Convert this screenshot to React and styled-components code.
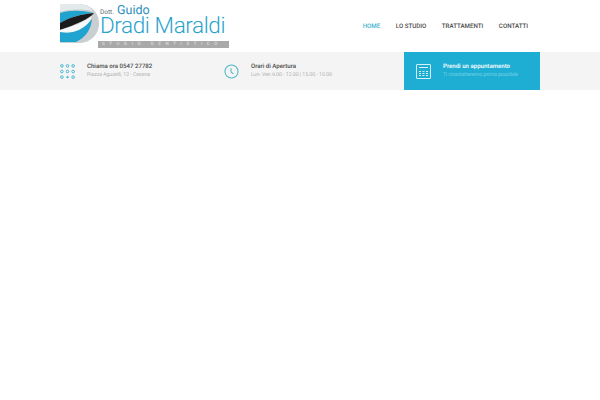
import React from 'react';
import styled, { createGlobalStyle } from 'styled-components';

const GlobalStyle = createGlobalStyle`
  html, body {
    margin: 0;
    padding: 0;
    background: #fff;
    font-family: 'Roboto', sans-serif;
    text-rendering: geometricPrecision;
  }
`;

const navItems = ['HOME', 'LO STUDIO', 'TRATTAMENTI', 'CONTATTI'];

const LogoMark = () => (
  <MarkSvg viewBox="0 0 39 39">
    <path d="M0 0H19C31 0 39 9 39 19.500C39 30 31 39 19 39H0Z" fill="#c9ced1" />
    <path d="M0 0H18C25 0 30 3 33 7C22 5 10 5 0 8Z" fill="#e4e9ec" />
    <path d="M0 9C10 6 22 6 33 9C22 10 10 13 0 19Z" fill="#1fa3cf" />
    <path d="M0 19C10 13 22 10 34 9C29 15 17 20 0 26Z" fill="#1b1b1d" />
    <path d="M0 26C12 23 24 18 32 12C30 19 25 24 19 27C12 29 6 29 0 28Z" fill="#f6f8f9" />
    <path d="M0 28C10 30 22 28 32 15C31 26 25 34 16 38H0Z" fill="#1fa3cf" />
  </MarkSvg>
);

const KeypadIcon = () => (
  <IconSvg viewBox="0 0 16 16" fill="none" stroke="#3fb3cf" strokeWidth="1">
    {[2, 8, 14].map((y) =>
      [2, 8, 14].map((x) =>
        x === 8 && y === 14
          ? <circle key={`${x}-${y}`} cx={x} cy={y} r="0.800" fill="#3fb3cf" />
          : <circle key={`${x}-${y}`} cx={x} cy={y} r="1.400" />
      )
    )}
  </IconSvg>
);

const ClockIcon = () => (
  <IconSvg viewBox="0 0 16 16" fill="none" stroke="#4db7c6" strokeWidth="1.100">
    <circle cx="8" cy="8" r="7" />
    <path d="M7.500 4.500V8.500L10 10.500" />
  </IconSvg>
);

const CalendarIcon = () => (
  <IconSvg viewBox="0 0 15 15" fill="none" stroke="#d5f0f8" strokeWidth="1">
    <rect x="0.500" y="0.500" width="14" height="14" rx="0.500" />
    <path d="M3 3.500H12" />
    <path d="M3 7.500H5M6.500 7.500H8.500M10 7.500H12M3 9.500H5M6.500 9.500H8.500M10 9.500H12M3 11.500H5M6.500 11.500H8.500M10 11.500H12" />
  </IconSvg>
);

const App = () => (
  <>
    <GlobalStyle />
    <Header>
      <Logo>
        <LogoMark />
        <LogoText>
          <Doctor>
            <small>Dott.</small> Guido
          </Doctor>
          <Name>Dradi Maraldi</Name>
        </LogoText>
        <Strapline>STUDIO DENTISTICO</Strapline>
      </Logo>
      <Nav>
        {navItems.map((item, i) => (
          <NavLink key={item} $active={i === 0}>{item}</NavLink>
        ))}
      </Nav>
    </Header>
    <InfoBar>
      <InfoInner>
        <InfoBlock $width="164px">
          <KeypadIcon />
          <div>
            <InfoTitle>Chiama ora 0547 27782</InfoTitle>
            <InfoText>Piazza Aguselli, 12 - Cesena</InfoText>
          </div>
        </InfoBlock>
        <InfoBlock $width="180px">
          <ClockIcon />
          <div>
            <InfoTitle>Orari di Apertura</InfoTitle>
            <InfoText>Lun- Ven 9.00 - 12.00 | 15.00 - 18.00</InfoText>
          </div>
        </InfoBlock>
        <Appointment>
          <CalendarIcon />
          <div>
            <AppointmentTitle>Prendi un appuntamento</AppointmentTitle>
            <AppointmentText>Ti ricontatteremo prima possibile</AppointmentText>
          </div>
        </Appointment>
      </InfoInner>
    </InfoBar>
  </>
);

export default App;

const Header = styled.header`
  width: 480px;
  height: 52px;
  margin: 0 auto;
  display: flex;
  justify-content: space-between;
  align-items: center;
`;

const Logo = styled.div`
  position: relative;
  width: 169px;
  height: 44px;
  display: flex;
`;

const MarkSvg = styled.svg`
  width: 39px;
  height: 39px;
  flex: none;
`;

const LogoText = styled.div`
  margin-left: 1px;
  color: #2ba3cb;
  font-family: 'Roboto', sans-serif;
  font-weight: 300;
`;

const Doctor = styled.div`
  height: 13px;
  font-size: 12.500px;
  line-height: 13px;
  font-weight: 400;
  color: #2b8fbc;
  white-space: nowrap;

  small {
    font-size: 6.500px;
    color: #5d6a75;
  }
`;

const Name = styled.div`
  font-size: 22.500px;
  line-height: 19px;
  letter-spacing: -0.400px;
  white-space: nowrap;
`;

const Strapline = styled.div`
  position: absolute;
  left: 38px;
  right: 0;
  bottom: 0;
  height: 7px;
  background: #a9a9a9;
  color: #e5e5e5;
  font-size: 4.500px;
  line-height: 7px;
  letter-spacing: 4.600px;
  white-space: nowrap;
  overflow: hidden;
  padding-left: 4px;
`;

const Nav = styled.nav`
  display: flex;
  gap: 15.500px;
  margin-right: 12px;
`;

const NavLink = styled.a`
  font-size: 6.200px;
  font-weight: 500;
  line-height: 10px;
  color: ${(props) => (props.$active ? '#3fb3cf' : '#4a4a4a')};
`;

const InfoBar = styled.div`
  height: 38px;
  background: #f4f4f4;
`;

const InfoInner = styled.div`
  width: 480px;
  height: 100%;
  margin: 0 auto;
  display: flex;
  align-items: stretch;
`;

const InfoBlock = styled.div`
  width: ${(props) => props.$width};
  display: flex;
  align-items: center;
  gap: 12px;
`;

const IconSvg = styled.svg`
  width: 15px;
  height: 15px;
  flex: none;
`;

const InfoTitle = styled.div`
  font-size: 6.100px;
  font-weight: 500;
  line-height: 8px;
  color: #4a4a4a;
  white-space: nowrap;
`;

const InfoText = styled.div`
  margin-top: 0.500px;
  font-size: 5.200px;
  font-weight: 300;
  line-height: 8px;
  color: #8a8a8a;
  white-space: nowrap;
`;

const Appointment = styled.div`
  flex: 1;
  background: #1eadd3;
  display: flex;
  align-items: center;
  gap: 12px;
  padding-left: 12px;
`;

const AppointmentTitle = styled(InfoTitle)`
  color: #fff;
`;

const AppointmentText = styled(InfoText)`
  color: #a6e0f0;
`;
